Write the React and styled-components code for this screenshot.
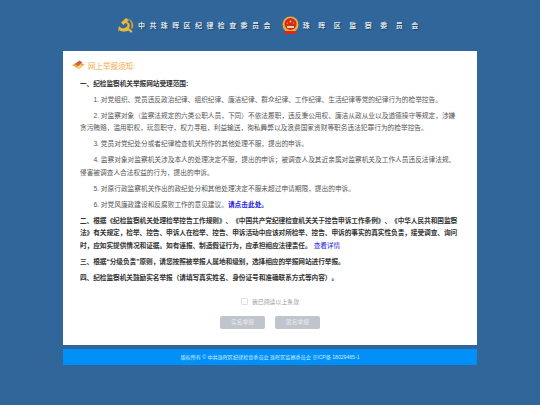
import React from 'react';
import styled, { createGlobalStyle } from 'styled-components';

const GlobalStyle = createGlobalStyle`
html, body {
    margin: 0;
    padding: 0;
    background: #31669a;
    font-family: "Liberation Sans", "Noto Sans CJK SC", sans-serif;
    text-spacing-trim: space-all;
}
`;

function PartyEmblem() {
    return (
        <svg width="16" height="17" viewBox="0 0 16 17">
            <path d="M8 1 L11 3 L9 5 C12 6 12.500 9 11 11 L13 13 L14.500 14 L13 16 L10.500 13.500 C8 15 4 15 1 13 L0 15 L0.500 11 L1 9 C3 12 7 12 9 9.500 C10 8 9.500 6.500 7.500 6 L5.500 8 L3 5.500 Z" fill="#e8b93c" />
            <path d="M10.500 1.500 C14 3 16 7 15 11 L13 12 C14 8 13 5 10.500 1.500 Z" fill="#d89a28" />
        </svg>
    );
}

function StateEmblem() {
    return (
        <svg width="17" height="19" viewBox="0 0 17 19">
            <circle cx="8.500" cy="8.500" r="8" fill="#e8b03a" />
            <circle cx="8.500" cy="8" r="6" fill="#d42a22" />
            <circle cx="8.500" cy="5.500" r="1" fill="#f4d050" />
            <circle cx="5.500" cy="7" r=".6" fill="#f4d050" />
            <circle cx="11.500" cy="7" r=".6" fill="#f4d050" />
            <rect x="5" y="10" width="7" height="2" fill="#f0d890" />
            <rect x="2.500" y="15" width="12" height="3" rx="1" fill="#d42a22" />
        </svg>
    );
}

function BookIcon() {
    return (
        <svg width="13" height="10" viewBox="0 0 13 10">
            <path d="M0 5 L6 2 L12.500 4.500 L7 9 Z" fill="#f0a83c" />
            <path d="M3 4 L7.500 0.500 L10.500 2.500 L6 6 Z" fill="#c8643c" />
            <path d="M5 7.500 L8 5 L10 5.500 L7 8.500 Z" fill="#f8dca0" />
        </svg>
    );
}

const notices = [
    '1. 对党组织、党员违反政治纪律、组织纪律、廉洁纪律、群众纪律、工作纪律、生活纪律等党的纪律行为的检举控告。',
    '2. 对监察对象（监察法规定的六类公职人员，下同）不依法履职，违反秉公用权、廉洁从政从业以及道德操守等规定，涉嫌贪污贿赂，滥用职权，玩忽职守，权力寻租，利益输送，徇私舞弊以及浪费国家资财等职务违法犯罪行为的检举控告。',
    '3. 党员对党纪处分或者纪律检查机关所作的其他处理不服，提出的申诉。',
    '4. 监察对象对监察机关涉及本人的处理决定不服，提出的申诉；被调查人及其近亲属对监察机关及工作人员违反法律法规、侵害被调查人合法权益的行为，提出的申诉。',
    '5. 对原行政监察机关作出的政纪处分和其他处理决定不服未超过申请期限，提出的申诉。',
];

function App() {
    return (
        <Page>
            <GlobalStyle />
            <Header>
                <PartyEmblem />
                <HeaderTitle $spacing={4.4}>中共珠晖区纪律检查委员会</HeaderTitle>
                <StateEmblem />
                <HeaderTitle $spacing={8.500}>珠晖区监察委员会</HeaderTitle>
            </Header>
            <Card>
                <CardTitle>
                    <BookIcon />
                    网上举报须知:
                </CardTitle>
                <Strong>一、纪检监察机关举报网站受理范围:</Strong>
                {notices.map((text) => (
                    <Item key={text}>{text}</Item>
                ))}
                <Item>
                    6. 对党风廉政建设和反腐败工作的意见建议。<Link>请点击此处。</Link>
                </Item>
                <Strong>
                    二、根据《纪检监察机关处理检举控告工作规则》、《中国共产党纪律检查机关关于控告申诉工作条例》、《中华人民共和国监察法》有关规定，检举、控告、申诉人在检举、控告、申诉活动中应该对所检举、控告、申诉的事实的真实性负责，接受调查、询问时，应如实提供情况和证据。如有诬报、制造假证行为，应承担相应法律责任。<Link $normal>查看详情</Link>
                </Strong>
                <Strong>三、根据“分级负责”原则，请您按照被举报人属地和级别，选择相应的举报网站进行举报。</Strong>
                <Strong>四、纪检监察机关鼓励实名举报（请填写真实姓名、身份证号和准确联系方式等内容）。</Strong>
                <Agree>
                    <CheckBox />
                    我已阅读以上条款
                </Agree>
                <Buttons>
                    <Button>实名举报</Button>
                    <Button>匿名举报</Button>
                </Buttons>
            </Card>
            <Footer>版权所有 © 中共珠晖区纪律检查委员会 珠晖区监察委员会 京ICP备 18029465-1</Footer>
        </Page>
    );
}

const Page = styled.div`
    width: 540px;
    height: 405px;
    overflow: hidden;
    background: #31669a;
    display: flex;
    flex-direction: column;
    align-items: center;
`;

const Header = styled.div`
    width: 100%;
    height: 51px;
    box-sizing: border-box;
    padding: 0 0 1px 118px;
    display: flex;
    align-items: center;
    svg:nth-of-type(2) {
        margin-left: 7px;
    }
`;

const HeaderTitle = styled.div`
    margin-left: 4px;
    font-size: 7px;
    font-weight: bold;
    letter-spacing: ${(p) => p.$spacing}px;
    color: #dfe6ee;
    text-shadow: 1px 1px 1px #1c3c5e;
    white-space: nowrap;
`;

const Card = styled.div`
    width: 414px;
    height: 294px;
    box-sizing: border-box;
    padding: 7px 17px 0;
    background: #fff;
    display: flex;
    flex-direction: column;
`;

const CardTitle = styled.div`
    display: flex;
    align-items: center;
    gap: 3px;
    margin-left: -8px;
    height: 14px;
    margin-bottom: 6px;
    font-size: 7.5px;
    color: #f2a83e;
`;

const Strong = styled.div`
    font-size: 6.7px;
    line-height: 12.4px;
    font-weight: bold;
    letter-spacing: -0.07px;
    color: #333;
    margin-bottom: 3.6px;
`;

const Item = styled.div`
    font-size: 6.7px;
    line-height: 12.4px;
    text-indent: 13.4px;
    color: #555;
    margin-bottom: 3.6px;
`;

const Link = styled.span`
    color: #2222dd;
    font-weight: ${(p) => (p.$normal ? 'normal' : 'bold')};
    margin-left: ${(p) => (p.$normal ? '2px' : '0')};
`;

const Agree = styled.div`
    display: flex;
    align-items: center;
    justify-content: center;
    gap: 4px;
    margin-top: 9px;
    font-size: 5.9px;
    line-height: 10px;
    color: #999;
`;

const CheckBox = styled.span`
    width: 5px;
    height: 5px;
    border: 1px solid #dcdfe6;
    border-radius: 1px;
    background: #fff;
`;

const Buttons = styled.div`
    display: flex;
    justify-content: center;
    gap: 10px;
    margin-top: 9px;
`;

const Button = styled.div`
    width: 45px;
    height: 13px;
    border-radius: 2px;
    background: #c0c4cc;
    color: #e8eaee;
    font-size: 5.8px;
    line-height: 13px;
    text-align: center;
`;

const Footer = styled.div`
    width: 414px;
    height: 16px;
    margin-top: 4px;
    background: #0090f8;
    color: #d5ecff;
    font-size: 5.1px;
    line-height: 16px;
    text-align: center;
`;

export default App;
